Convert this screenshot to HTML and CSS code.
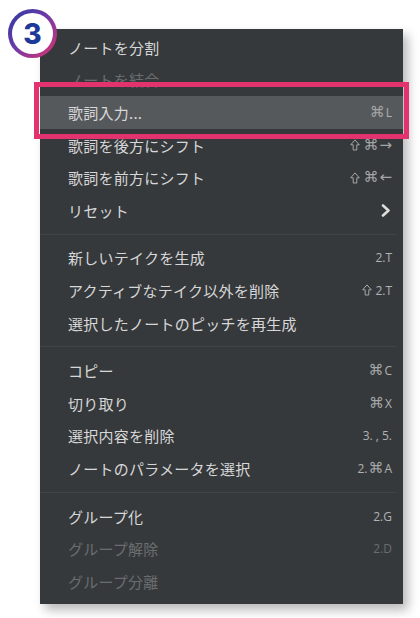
FILE: index.html
```html
<!DOCTYPE html>
<html lang="ja">
<head>
<meta charset="utf-8">
<link rel="stylesheet" href="styles.css">
</head>
<body>
<div class="stage">
  <div class="badge">3</div>
  <div class="menu">
    <div class="row"><span class="label">ノートを分割</span></div>
    <div class="row dim"><span class="label">ノートを結合</span></div>
    <div class="row active"><span class="label">歌詞入力...</span><span class="key"><span class="sym">⌘</span>L</span></div>
    <div class="row"><span class="label">歌詞を後方にシフト</span><span class="key"><svg class="shift" width="10" height="12" viewBox="0 0 10 12"><path d="M5 0.9 L9.3 5.8 H6.8 V11 H3.2 V5.8 H0.7 Z" fill="none" stroke="#a4a6a8" stroke-width="1" stroke-linejoin="round"/></svg><span class="sym">⌘</span><span class="sym">→</span></span></div>
    <div class="row"><span class="label">歌詞を前方にシフト</span><span class="key"><svg class="shift" width="10" height="12" viewBox="0 0 10 12"><path d="M5 0.9 L9.3 5.8 H6.8 V11 H3.2 V5.8 H0.7 Z" fill="none" stroke="#a4a6a8" stroke-width="1" stroke-linejoin="round"/></svg><span class="sym">⌘</span><span class="sym">←</span></span></div>
    <div class="row"><span class="label">リセット</span>
      <svg class="chev" width="10" height="13" viewBox="0 0 10 13"><polyline points="2,1.5 7.5,6.5 2,11.5" fill="none" stroke="#dcdcdc" stroke-width="2.6" stroke-linecap="round" stroke-linejoin="round"/></svg>
    </div>
    <div class="sep"></div>
    <div class="row"><span class="label">新しいテイクを生成</span><span class="key">2.T</span></div>
    <div class="row"><span class="label">アクティブなテイク以外を削除</span><span class="key"><svg class="shift" width="10" height="12" viewBox="0 0 10 12"><path d="M5 0.9 L9.3 5.8 H6.8 V11 H3.2 V5.8 H0.7 Z" fill="none" stroke="#a4a6a8" stroke-width="1" stroke-linejoin="round"/></svg>2.T</span></div>
    <div class="row"><span class="label">選択したノートのピッチを再生成</span></div>
    <div class="sep"></div>
    <div class="row"><span class="label">コピー</span><span class="key"><span class="sym">⌘</span>C</span></div>
    <div class="row"><span class="label">切り取り</span><span class="key"><span class="sym">⌘</span>X</span></div>
    <div class="row"><span class="label">選択内容を削除</span><span class="key">3. , 5.</span></div>
    <div class="row"><span class="label">ノートのパラメータを選択</span><span class="key">2.<span class="sym">⌘</span>A</span></div>
    <div class="sep"></div>
    <div class="row"><span class="label">グループ化</span><span class="key">2.G</span></div>
    <div class="row dim"><span class="label">グループ解除</span><span class="key">2.D</span></div>
    <div class="row dim"><span class="label">グループ分離</span></div>
  </div>
  <div class="focus"></div>
</div>
</body>
</html>
```
FILE: styles.css
```css
html, body {
  margin: 0;
  padding: 0;
  background: #ffffff;
}
.stage {
  position: relative;
  width: 420px;
  height: 618px;
  padding-top: 29px;
  box-sizing: border-box;
}
.menu {
  margin-left: 40px;
  width: 363px;
  background: #36393b;
  padding: 2px 0 6px 0;
  box-shadow: 5px 6px 10px rgba(0, 0, 0, 0.28);
  font-family: "Noto Sans CJK JP", "Noto Sans", sans-serif;
}
.row {
  height: 32.6px;
  display: flex;
  align-items: center;
  justify-content: space-between;
  padding: 0 11px 0 28px;
}
.label {
  font-size: 15px;
  letter-spacing: 0.25px;
  color: #d6d7d8;
}
.key {
  font-family: "Open Sans", "DejaVu Sans", sans-serif;
  font-size: 12px;
  color: #b0b2b3;
  display: flex;
  align-items: center;
  gap: 1px;
}
.sym {
  font-family: "DejaVu Sans", sans-serif;
  font-size: 15px;
  line-height: 1;
  color: #a4a6a8;
}
.shift {
  display: block;
  margin-right: 2px;
}
.dim .label, .dim .key {
  color: #6a6d70;
}
.active {
  background: #56595b;
}
.chev {
  margin-right: 1px;
}
.sep {
  height: 15px;
  display: flex;
  align-items: center;
  padding-right: 6px;
}
.sep::before {
  content: "";
  display: block;
  flex: 1;
  height: 1px;
  background: #414446;
}
.badge {
  position: absolute;
  left: 8px;
  top: 9px;
  width: 49px;
  height: 49px;
  box-sizing: border-box;
  border-radius: 50%;
  border: 4px solid transparent;
  background:
    linear-gradient(#ffffff, #ffffff) padding-box,
    linear-gradient(135deg, #2d3aa3 0%, #6a3aa8 45%, #e2336f 100%) border-box;
  display: flex;
  align-items: center;
  justify-content: center;
  font-family: "Inter", "Roboto", sans-serif;
  font-weight: 800;
  font-size: 28px;
  color: #1d3a98;
  z-index: 2;
}
.focus {
  position: absolute;
  left: 34px;
  top: 82px;
  width: 375px;
  height: 57px;
  box-sizing: border-box;
  border: 5px solid #e2336f;
}
```
